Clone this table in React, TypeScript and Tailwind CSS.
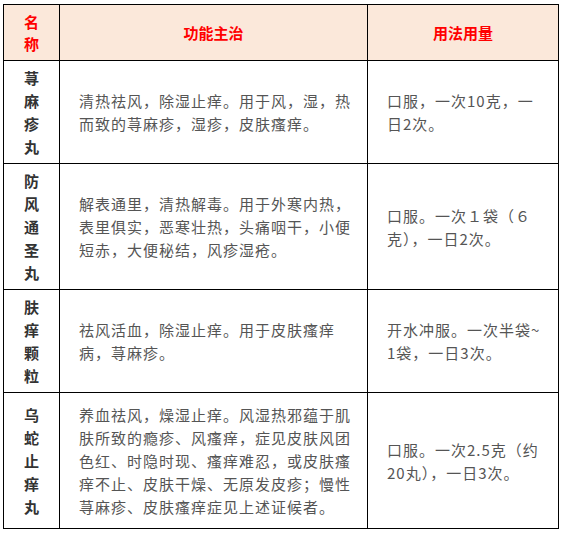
const rows = [
  {
    name: ['荨', '麻', '疹', '丸'],
    h: 'h-[103px]',
    fn: '清热祛风，除湿止痒。用于风，湿，热而致的荨麻疹，湿疹，皮肤瘙痒。',
    use: '口服，一次10克，一日2次。',
  },
  {
    name: ['防', '风', '通', '圣', '丸'],
    h: 'h-[126px]',
    fn: '解表通里，清热解毒。用于外寒内热，表里俱实，恶寒壮热，头痛咽干，小便短赤，大便秘结，风疹湿疮。',
    use: '口服。一次１袋（６克），一日2次。',
  },
  {
    name: ['肤', '痒', '颗', '粒'],
    h: 'h-[103px]',
    fn: '祛风活血，除湿止痒。用于皮肤瘙痒病，荨麻疹。',
    use: '开水冲服。一次半袋~\u200b1袋，一日3次。',
  },
  {
    name: ['乌', '蛇', '止', '痒', '丸'],
    h: 'h-[136px]',
    fn: '养血祛风，燥湿止痒。风湿热邪蕴于肌肤所致的瘾疹、风瘙痒，症见皮肤风团色红、时隐时现、瘙痒难忍，或皮肤瘙痒不止、皮肤干燥、无原发皮疹；慢性荨麻疹、皮肤瘙痒症见上述证候者。',
    use: '口服。一次2.5克（约20丸），一日3次。',
  },
];

export default function App() {
  return (
    <div
      className="w-[562px] h-[533px] bg-white pt-[4px] pl-[3px]"
      style={{ fontFamily: '"Noto Sans CJK SC", "Noto Sans", sans-serif' }}
    >
      <table className="border-collapse table-fixed w-[555px]">
        <colgroup>
          <col className="w-[56px]" />
          <col className="w-[308px]" />
          <col className="w-[191px]" />
        </colgroup>
        <thead>
          <tr className="h-[56px] bg-[#fbe8da]">
            <th className="border border-black text-[#ff0000] font-bold text-[15px] leading-[22px] px-[18px]">
              名称
            </th>
            <th className="border border-black text-[#ff0000] font-bold text-[15px] leading-[22px]">
              功能主治
            </th>
            <th className="border border-black text-[#ff0000] font-bold text-[15px] leading-[22px]">
              用法用量
            </th>
          </tr>
        </thead>
        <tbody>
          {rows.map((r) => (
            <tr key={r.name.join('')} className={r.h}>
              <td className="border border-black text-center align-middle">
                <div className="flex flex-col items-center text-[15px] leading-[23px] font-bold text-[#333]">
                  {r.name.map((c, i) => (
                    <span key={i}>{c}</span>
                  ))}
                </div>
              </td>
              <td className="border border-black align-middle pl-[19px] pr-[14px] text-[15px] leading-[23px] tracking-[1px] text-[#555]">
                {r.fn}
              </td>
              <td className="border border-black align-middle pl-[19px] pr-[14px] text-[15px] leading-[23px] tracking-[1px] text-[#555]">
                {r.use}
              </td>
            </tr>
          ))}
        </tbody>
      </table>
    </div>
  );
}
